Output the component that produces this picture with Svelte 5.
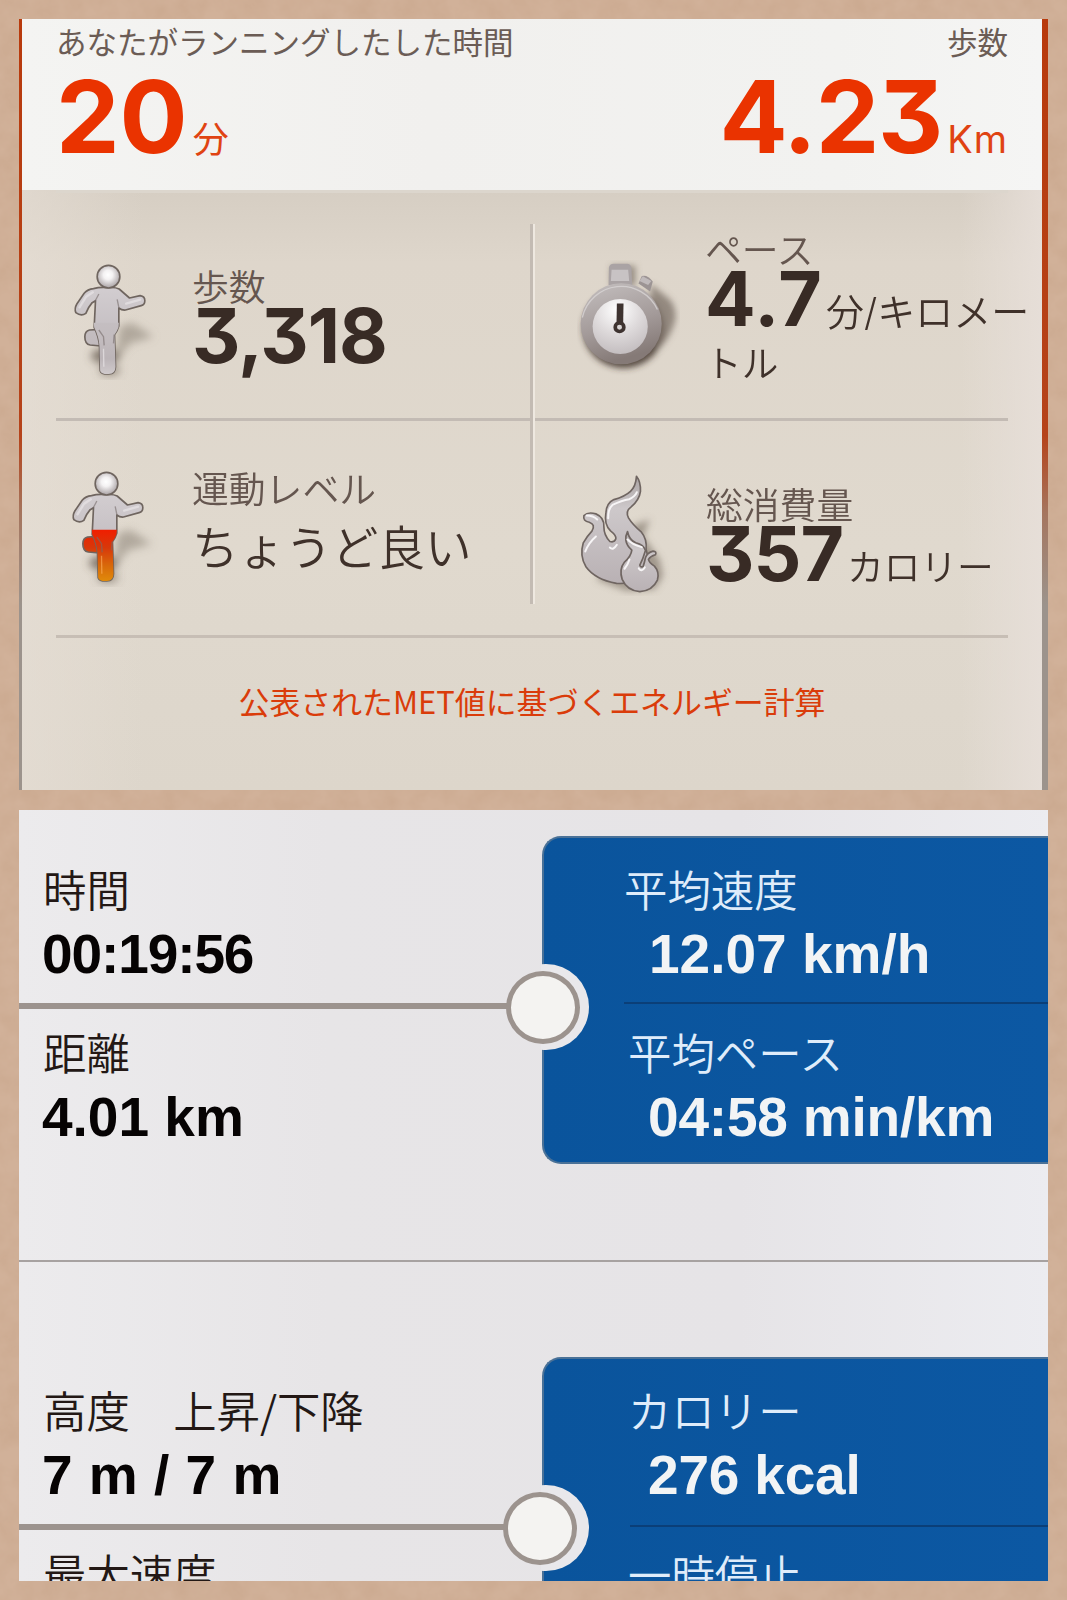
<script>
  const sections = [
    {
      id: 'speed',
      left: [
        { label: '時間', value: '00:19:56', tracking: -1.1 },
        { label: '距離', value: '4.01 km', tracking: 0 }
      ],
      right: [
        { label: '平均速度', value: '12.07 km/h', tracking: 0 },
        { label: '平均ペース', value: '04:58 min/km', tracking: -0.2 }
      ]
    },
    {
      id: 'calorie',
      left: [
        { label: '高度　上昇/下降', value: '7 m / 7 m', tracking: 0.5 },
        { label: '最大速度', value: '', tracking: 0 }
      ],
      right: [
        { label: 'カロリー', value: '276 kcal', tracking: -0.2 },
        { label: '一時停止', value: '', tracking: 0 }
      ]
    }
  ];
</script>

{#snippet runner(id, active)}
  <svg class="runner" viewBox="60 120 290 360">
    <defs>
      <radialGradient id="{id}-head" cx="48%" cy="42%" r="58%">
        <stop offset="0" stop-color="#fff" />
        <stop offset="0.35" stop-color="#f4f2f3" />
        <stop offset="1" stop-color="#a8a1a3" />
      </radialGradient>
      <linearGradient id="{id}-body" x1="0" y1="0" x2="0" y2="1">
        <stop offset="0" stop-color="#d2cdd0" />
        <stop offset="1" stop-color="#b9b2b6" />
      </linearGradient>
      <linearGradient id="{id}-leg" gradientUnits="userSpaceOnUse" x1="0" y1="308" x2="0" y2="462">
        <stop offset="0" stop-color={active ? '#f01e00' : '#c4bec1'} />
        <stop offset="0.35" stop-color={active ? '#d8380a' : '#c2bbbe'} />
        <stop offset="0.7" stop-color={active ? '#d8690a' : '#bcb5b8'} />
        <stop offset="1" stop-color={active ? '#e08a0a' : '#d0cacc'} />
      </linearGradient>
      <filter id="{id}-blur" x="-40%" y="-40%" width="180%" height="180%">
        <feGaussianBlur stdDeviation="13" />
      </filter>
    </defs>
    <g filter="url(#{id}-blur)">
      <path d="M196 440L208 320L245 308L310 350L240 370L212 405Z" fill="#8b8174" opacity=".55" />
      <ellipse cx="165" cy="408" rx="42" ry="22" fill="#5d5146" opacity=".75" />
      <ellipse cx="178" cy="452" rx="32" ry="14" fill="#6d6156" opacity=".65" />
    </g>
    <g stroke="#6f655f" stroke-width="5" stroke-linejoin="round">
      <path d="M150 328L118 330Q104 334 104 350Q104 372 120 375L152 378Z" fill="url(#{id}-leg)" />
      <path
        d="M130 206Q150 200 175 203Q195 201 207 207Q222 220 238 234L270 227Q284 229 284 242Q284 254 273 257L226 270Q215 271 206 264L206 318Q202 332 193 344L196 440Q196 460 176 462Q153 463 150 452L148 378Q146 350 132 322L136 242L126 248Q114 262 107 280Q93 290 77 278Q72 266 80 252L102 220Q112 208 130 206Z"
        fill="url(#{id}-body)"
      />
      <path
        d="M131 308L206 308L205 322Q201 334 193 344L196 440Q196 460 176 462Q153 463 150 452L148 378Q146 350 132 322Z"
        fill="url(#{id}-leg)"
        stroke="none"
      />
      <circle cx="175" cy="170" r="34" fill="url(#{id}-head)" />
    </g>
    <path d="M135 243L146 222M206 262L201 238M146 330L160 350L162 376M192 344L190 370" fill="none" stroke="#776d6b" stroke-width="4" opacity=".6" />
    <path d="M88 262L108 230L128 217M228 251L270 239" fill="none" stroke="#eeebed" stroke-width="7" stroke-linecap="round" opacity=".55" />
    <path d="M160 386L161 440" fill="none" stroke={active ? '#ffb060' : '#f0edef'} stroke-width="4" opacity=".6" />
  </svg>
{/snippet}

<svg class="paper">
  <filter id="grain">
    <feTurbulence type="fractalNoise" baseFrequency="0.045" numOctaves="4" seed="7" />
    <feColorMatrix values="0 0 0 0 .56  0 0 0 0 .36  0 0 0 0 .24  .75 0 0 0 -.22" />
  </filter>
  <rect width="100%" height="100%" filter="url(#grain)" />
</svg>

<main>
  <section class="run">
    <header>
      <div>
        <p class="caption">あなたがランニングしたした時間</p>
        <p class="total">20<small class="kanji">分</small></p>
      </div>
      <div class="end">
        <p class="caption">歩数</p>
        <p class="total">4.23<small>Km</small></p>
      </div>
    </header>

    <div class="board">
      <div class="grid">
        <div class="cell steps">
          {@render runner('steps', false)}
          <div class="info">
            <p class="name">歩数</p>
            <p class="figure">3,318</p>
          </div>
        </div>

        <div class="cell pace">
          <svg class="watch" viewBox="50 120 310 350">
            <defs>
              <radialGradient id="dial" cx="45%" cy="20%" r="85%">
                <stop offset="0" stop-color="#fff" />
                <stop offset=".5" stop-color="#dedadb" />
                <stop offset="1" stop-color="#c0babc" />
              </radialGradient>
              <linearGradient id="ring" x1="0" y1="0" x2=".3" y2="1">
                <stop offset="0" stop-color="#c5c0c0" />
                <stop offset=".6" stop-color="#a39a99" />
                <stop offset="1" stop-color="#857a77" />
              </linearGradient>
              <filter id="watch-blur" x="-30%" y="-30%" width="160%" height="160%">
                <feGaussianBlur stdDeviation="9" />
              </filter>
            </defs>
            <g filter="url(#watch-blur)">
              <ellipse cx="190" cy="326" rx="122" ry="118" fill="#3f312a" opacity=".85" />
              <path d="M270 190L318 228Q350 250 346 300Q330 360 290 390Z" fill="#7a6f65" opacity=".75" />
              <rect x="152" y="136" width="74" height="60" fill="#7a6f65" opacity=".7" />
            </g>
            <path d="M235 190L245 167Q262 162 278 184L270 214Z" fill="#9c9494" />
            <path d="M238 182L248 168L274 182L264 194Z" fill="#c0babb" />
            <path d="M145 194L146 142Q148 130 160 130L202 130Q213 132 214 144L216 194Z" fill="#aaa3a4" />
            <path d="M154 148L204 148L207 182L152 182Z" fill="#c8c3c4" />
            <circle cx="183" cy="311" r="122" fill="url(#ring)" />
            <path d="M66 292A120 120 0 0 1 292 268" fill="none" stroke="#d8d4d4" stroke-width="4" opacity=".8" />
            <circle cx="180" cy="319" r="83" fill="url(#dial)" />
            <path d="M170 250L190 250L189 308L169 308Z" fill="#3e3330" />
            <circle cx="178" cy="321" r="13" fill="#d8d4d4" stroke="#3e3330" stroke-width="11" />
          </svg>
          <div class="info">
            <p class="name">ペース</p>
            <p class="figure">4.7<small>分/キロメー</small></p>
            <p class="rest">トル</p>
          </div>
        </div>

        <div class="cell level">
          {@render runner('level', true)}
          <div class="info">
            <p class="name">運動レベル</p>
            <p class="verdict">ちょうど良い</p>
          </div>
        </div>

        <div class="cell energy">
          <svg class="flame" viewBox="55 70 275 370">
            <defs>
              <linearGradient id="fire" x1="0" y1="0" x2="0" y2="1">
                <stop offset="0" stop-color="#aaa3a3" />
                <stop offset=".3" stop-color="#cdc8ca" />
                <stop offset="1" stop-color="#b9b1b4" />
              </linearGradient>
              <filter id="flame-blur" x="-30%" y="-30%" width="160%" height="160%">
                <feGaussianBlur stdDeviation="12" />
              </filter>
            </defs>
            <g filter="url(#flame-blur)">
              <path d="M215 230L270 210L250 260L300 330L310 380L285 420L200 425L110 390Z" fill="#7e7368" opacity=".65" />
            </g>
            <g fill="url(#fire)" stroke="#6f6561" stroke-width="5" stroke-linejoin="round">
              <path d="M230 80Q243 96 242 125Q239 150 214 172Q196 185 206 205Q218 225 245 248Q262 268 259 300Q275 345 250 385Q215 405 170 402Q105 390 78 352Q58 320 70 280Q80 262 96 245Q108 225 88 218Q68 215 72 198Q84 186 108 193Q134 204 132 232Q132 258 150 276Q164 280 168 268Q170 258 152 244Q132 225 138 190Q140 160 162 150Q196 140 212 125Q228 110 230 80Z" />
              <path d="M203 246Q196 260 198 272Q200 288 216 302Q214 320 194 338Q177 360 187 390Q202 424 240 427Q278 424 293 392Q300 368 284 350Q268 340 266 330Q272 320 287 316Q292 306 280 305Q262 310 257 325Q254 340 250 351Q242 355 240 347Q250 328 257 303Q252 286 228 280Q208 272 203 246Z" />
            </g>
            <path d="M145 206Q144 178 158 166Q186 153 208 149Q226 140 231 128M80 198Q100 198 112 210M76 306Q86 280 108 261M150 294Q160 304 171 286M209 330Q204 346 194 358M203 270Q215 285 246 293M237 357Q245 370 255 354" fill="none" stroke="#f7f5f6" stroke-width="6" stroke-linecap="round" />
          </svg>
          <div class="info">
            <p class="name">総消費量</p>
            <p class="figure">357<small>カロリー</small></p>
          </div>
        </div>
        <span class="rule"></span>
      </div>
      <p class="met">公表されたMET値に基づくエネルギー計算</p>
    </div>
  </section>

  <section class="log">
    {#each sections as section}
      <div class="block {section.id}">
        <div class="plain">
          {#each section.left as item}
            <div class="item">
              <p class="label">{item.label}</p>
              <p class="value" style="letter-spacing: {item.tracking}px">{item.value}</p>
            </div>
          {/each}
        </div>
        <div class="blue">
          {#each section.right as item}
            <div class="item">
              <p class="label">{item.label}</p>
              <p class="value" style="letter-spacing: {item.tracking}px">{item.value}</p>
            </div>
          {/each}
        </div>
        <span class="notch"></span>
        <span class="knob"></span>
      </div>
    {/each}
  </section>
</main>

<style>
  :global(body) {
    margin: 0;
    background: #d1b199;
  }

  p {
    margin: 0;
    white-space: nowrap;
  }

  .paper {
    position: absolute;
    inset: 0;
    width: 1067px;
    height: 1600px;
  }

  main {
    position: relative;
    box-sizing: border-box;
    width: 1067px;
    height: 1600px;
    padding: 19px;
    display: flex;
    flex-direction: column;
    gap: 20px;
    overflow: hidden;
    font-family: 'Noto Sans CJK JP', sans-serif;
  }

  .run {
    box-sizing: border-box;
    height: 771px;
    padding: 0 6px 0 3px;
    display: flex;
    flex-direction: column;
    background: linear-gradient(#b83a0c 0, #b5431a 54%, #a5755e 64%, #9c938c 76%, #9c938c 100%);
  }

  header {
    box-sizing: border-box;
    height: 171px;
    padding: 0 34px;
    display: flex;
    justify-content: space-between;
    background: linear-gradient(90deg, #f4f4f2, #f1f0ee 40%, #f2f2f0 80%, #f5f5f4);
  }

  .end {
    text-align: right;
  }

  .caption {
    height: 46px;
    margin-top: -1px;
    line-height: 46px;
    font-size: 30.5px;
    color: #6b5c55;
  }

  .total {
    height: 104px;
    line-height: 104px;
    font-family: Inter, 'Noto Sans CJK JP', sans-serif;
    font-size: 101px;
    font-weight: 650;
    font-feature-settings: 'cv09';
    letter-spacing: 0;
    color: #ea3300;
  }

  .end .total {
    letter-spacing: -1.2px;
  }

  .total small {
    margin-left: 5px;
    font-size: 38px;
    font-weight: 400;
    letter-spacing: 1px;
    color: #e04312;
  }

  .total .kanji {
    font-size: 36px;
  }

  .board {
    flex: 1;
    background:
      linear-gradient(90deg, rgba(230, 222, 213, 0.6), rgba(230, 222, 213, 0) 12%, rgba(230, 222, 213, 0) 92%, rgba(231, 223, 217, 0.9)),
      linear-gradient(#d6cec3, #ded6cb 12%, #e0d9ce 60%, #ddd6cb);
  }

  .grid {
    position: relative;
    box-sizing: border-box;
    width: 952px;
    height: 448px;
    margin: 0 34px 43px;
    display: grid;
    grid-template-columns: 476px 476px;
    grid-template-rows: 228px 214px;
    border-top: 3px solid #dcd6cd;
    border-bottom: 3px solid #c7beb5;
  }

  .rule {
    position: absolute;
    left: 474px;
    top: 31px;
    width: 3px;
    height: 380px;
    background: #c3bbb3;
    border-right: 2px solid #eee8e0;
  }

  .cell {
    display: flex;
    box-sizing: border-box;
  }

  .steps,
  .pace {
    border-bottom: 3px solid #c3bbb4;
  }

  .runner {
    width: 97px;
    height: 120px;
    flex: none;
    margin: 67px 0 0 14px;
  }

  .level .runner {
    margin: 46px 0 0 12px;
  }

  .watch {
    width: 103px;
    height: 117px;
    flex: none;
    margin: 67px 0 0 45px;
  }

  .flame {
    width: 92px;
    height: 123px;
    flex: none;
    margin: 52px 0 0 46px;
  }

  .name {
    height: 40px;
    line-height: 40px;
    font-size: 36.8px;
    font-weight: 350;
    color: #65564f;
  }

  .figure {
    height: 62px;
    line-height: 62px;
    font-family: Inter, 'Noto Sans CJK JP', sans-serif;
    font-size: 75px;
    font-weight: 650;
    font-feature-settings: 'cv09';
    letter-spacing: -1px;
    color: #382b25;
  }

  .figure small,
  .rest {
    font-size: 36.7px;
    font-weight: 350;
    letter-spacing: 0;
    color: #3f312a;
  }

  .figure small {
    margin-left: 4px;
  }

  .pace .figure {
    letter-spacing: 1px;
  }

  .pace small {
    margin-left: 3px;
    font-size: 38px;
  }

  .rest {
    height: 40px;
    margin-top: 11px;
    line-height: 40px;
  }

  .steps .info {
    margin: 72px 0 0 25px;
  }

  .pace .info {
    width: 0;
    margin: 35px 0 0 25px;
  }

  .level .info {
    margin: 46px 0 0 27px;
  }

  .energy .info {
    margin: 62px 0 0 36px;
  }

  .verdict {
    height: 60px;
    margin-top: 8px;
    line-height: 60px;
    font-size: 46.6px;
    font-weight: 350;
    color: #3f312a;
  }

  .met {
    height: 40px;
    line-height: 40px;
    text-align: center;
    font-size: 30.9px;
    color: #da3c0a;
  }

  .log {
    width: 1029px;
    height: 771px;
    overflow: hidden;
    background: linear-gradient(90deg, #ecebed, #e7e5e7 30%, #e6e4e7 70%, #ececf0);
  }

  .block {
    position: relative;
    box-sizing: border-box;
    height: 452px;
    padding-top: 26px;
    display: grid;
    grid-template-columns: 523px 1fr;
    grid-template-rows: 328px;
    border-bottom: 2px solid #a7a2a1;
  }

  .calorie {
    padding-top: 95px;
    border-bottom: none;
  }

  .item {
    box-sizing: border-box;
    height: 167px;
    padding: 25px 0 0 24px;
  }

  .plain .item + .item {
    height: 161px;
    margin-right: 20px;
    padding-top: 15px;
    border-top: 6px solid #9c938e;
  }

  .label {
    height: 54px;
    line-height: 54px;
    font-size: 43.4px;
    font-weight: 350;
    color: #231815;
  }

  .value {
    height: 60px;
    margin: 9px 0 0 -1px;
    line-height: 60px;
    font-family: 'Liberation Sans', Arial, sans-serif;
    font-size: 55px;
    font-weight: 700;
    color: #060303;
  }

  .blue {
    overflow: hidden;
    box-sizing: border-box;
    border: 2px solid #4a7197;
    border-right: none;
    border-radius: 19px 0 0 19px;
    background: linear-gradient(90deg, #0a549c, #0c58a3);
    padding-left: 80px;
  }

  .blue .item {
    height: 164px;
    padding: 23px 0 0;
  }

  .blue .item + .item {
    padding: 20px 0 0 4px;
    border-top: 2px solid #0b3f78;
  }

  .calorie .blue {
    padding-left: 86px;
  }

  .calorie .blue .item {
    height: 166px;
  }

  .calorie .blue .label {
    margin-left: -2px;
  }

  .calorie .blue .item + .item {
    padding: 19px 0 0;
  }

  .blue .label {
    color: #dfecfa;
  }

  .blue .value {
    padding-left: 26px;
    color: #f2f4f5;
  }

  .blue .item + .item .value {
    padding-left: 21px;
  }

  .calorie .blue .value {
    padding-left: 19px;
  }

  .notch,
  .knob {
    position: absolute;
    box-sizing: border-box;
    border-radius: 50%;
  }

  .notch {
    left: 484px;
    top: 154px;
    width: 86px;
    height: 86px;
    background: #e9e8eb;
    clip-path: inset(0 0 0 38px);
  }

  .knob {
    left: 487px;
    top: 161px;
    width: 74px;
    height: 73px;
    border: 5px solid #9c938e;
    background: #f4f3f1;
  }

  .calorie .notch {
    top: 223px;
  }

  .calorie .knob {
    left: 484px;
    top: 230px;
  }
</style>
